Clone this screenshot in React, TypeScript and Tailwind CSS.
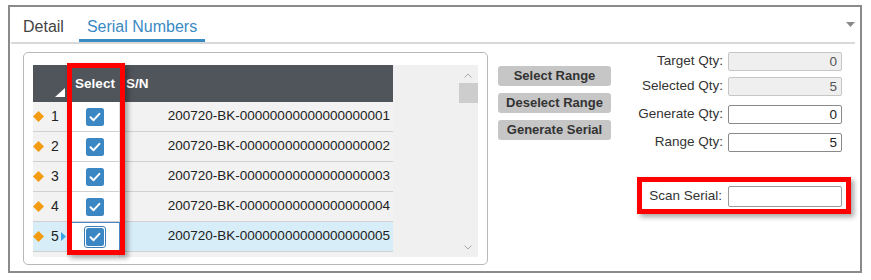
import React from "react";

const rows = [1, 2, 3, 4, 5, 6];

function Diamond() {
  return (
    <svg width="11" height="11" viewBox="0 0 10 10">
      <polygon points="5,0 10,5 5,10 0,5" fill="#f39c12" />
    </svg>
  );
}

function Check({ focused }: { focused?: boolean }) {
  if (focused) {
    return (
      <div className="w-[22px] h-[22px] border border-[#3e7fb8] rounded-[3px] bg-white flex items-center justify-center">
        <svg width="18" height="18" viewBox="0 0 18 18">
          <rect x="0" y="0" width="18" height="18" rx="2.5" fill="#3a87c4" />
          <path d="M4.5 9.2 L7.6 12.2 L13.4 5.8" stroke="#fff" strokeWidth="2" fill="none" strokeLinecap="round" strokeLinejoin="round" />
        </svg>
      </div>
    );
  }
  return (
    <svg width="18" height="18" viewBox="0 0 18 18">
      <rect x="0" y="0" width="18" height="18" rx="2.5" fill="#3a87c4" />
      <path d="M4.5 9.2 L7.6 12.2 L13.4 5.8" stroke="#fff" strokeWidth="2" fill="none" strokeLinecap="round" strokeLinejoin="round" />
    </svg>
  );
}

function QtyRow({ label, value, disabled, className }: { label: string; value: string; disabled?: boolean; className?: string }) {
  return (
    <div className={"flex items-center justify-end h-[19px] " + (className ?? "")}>
      <span className="text-[13.5px] text-[#333] mr-[5px]">{label}</span>
      <div
        className={
          disabled
            ? "w-[114px] h-full rounded-[2px] border border-[#c6c6c6] bg-[#efefef] text-[13.5px] text-[#555] text-right pr-[4px] leading-[17px]"
            : "w-[114px] h-full rounded-[2px] border border-[#8a8a8a] bg-white text-[13.5px] text-[#222] text-right pr-[4px] leading-[17px]"
        }
      >
        {value}
      </div>
    </div>
  );
}

export default function App() {
  return (
    <div
      className="w-[871px] h-[280px] bg-white pt-[5px] pl-[8px] overflow-hidden"
      style={{ fontFamily: '"Liberation Sans", Arial, sans-serif' }}
    >
      <div className="w-[854px] h-[268px] border-2 border-[#8a8a8a] flex flex-col">
        {/* Tabs */}
        <div className="h-[35px] flex items-stretch pl-[5px]">
          <div className="px-2 pt-[8px] text-[16px] text-[#444]">Detail</div>
          <div className="ml-[7px] px-2 pt-[8px] text-[16px] text-[#3a8ac4] border-b-[3px] border-[#3a8ac4]">
            Serial Numbers
          </div>
          <div className="ml-auto mr-[5px] pt-[15px]">
            <svg width="9" height="5" viewBox="0 0 9 5">
              <polygon points="0,0 9,0 4.5,5" fill="#8a8a8a" />
            </svg>
          </div>
        </div>
        <div className="h-[2px] bg-[#d9d9d9] ml-[1px] mr-[5px]" />

        <div className="flex mt-[8px]">
          {/* Grid panel */}
          <div className="relative ml-[13px] w-[465px] h-[213px] border border-[#b8b8b8] rounded-[5px] pt-[12px] pl-[9px]">
            <div className="w-[445px] h-[192px] bg-[#f0f0f0] overflow-hidden flex">
              <div className="w-[360px] flex flex-col">
                <div className="h-[37px] shrink-0 bg-[#50545b] flex text-white font-bold text-[13.5px]">
                  <div className="w-[37px] relative">
                    <svg className="absolute left-[22px] top-[23px]" width="10" height="9" viewBox="0 0 10 9">
                      <polygon points="10,0 10,9 0,9" fill="#fff" />
                    </svg>
                  </div>
                  <div className="w-[50px] flex items-center justify-center pt-[1px]">Select</div>
                  <div className="flex-1 flex items-center pl-[6px] pt-[1px]">S/N</div>
                </div>
                {rows.map((n) => {
                  const active = n === 5;
                  const partial = n === 6;
                  const cellBg = active ? "bg-[#d7eef9]" : "bg-[#f2f2f2]";
                  return (
                    <div key={n} className="h-[30px] shrink-0 flex border-b border-[#d0d0d0] text-[#222]">
                      <div className={"w-[37px] flex items-center border-r border-[#e0e0e0] " + cellBg}>
                        {!partial && (
                          <>
                            <Diamond />
                            <span className="ml-[7px] text-[14px]">{n}</span>
                          </>
                        )}
                        {active && (
                          <svg className="ml-[2px]" width="5" height="9" viewBox="0 0 5 9">
                            <polygon points="0,0 5,4.5 0,9" fill="#3ea3e0" />
                          </svg>
                        )}
                      </div>
                      <div
                        className={
                          "w-[50px] flex items-center justify-center bg-white " +
                          (active ? "border border-[#4a86c5]" : "border-r border-[#e0e0e0]")
                        }
                      >
                        <Check focused={active} />
                      </div>
                      <div className={"flex-1 flex items-center justify-end pr-[3px] text-[13.5px] " + cellBg}>
                        {partial ? "" : "200720-BK-" + String(n).padStart(20, "0")}
                      </div>
                    </div>
                  );
                })}
              </div>
              <div className="flex-1" />
              <div className="w-[20px] flex flex-col items-center">
                <svg className="mt-[8px]" width="8" height="5" viewBox="0 0 8 5">
                  <path d="M0.5 4.5 L4 1 L7.5 4.5" stroke="#a8a8a8" strokeWidth="1" fill="none" />
                </svg>
                <div className="mt-[5px] w-[19px] h-[20px] bg-[#cdcdcd]" />
                <svg className="mt-auto mb-[7px]" width="8" height="5" viewBox="0 0 8 5">
                  <path d="M0.5 0.5 L4 4 L7.5 0.5" stroke="#a8a8a8" strokeWidth="1" fill="none" />
                </svg>
              </div>
            </div>
            <div className="absolute left-[43px] top-[10px] w-[58px] h-[192px] border-[5px] border-[#ff0000] shadow-[3px_3px_5px_rgba(0,0,0,0.35)]" />
          </div>

          {/* Buttons */}
          <div className="ml-[10px] pt-[14px] flex flex-col gap-[7px]">
            {["Select Range", "Deselect Range", "Generate Serial"].map((b) => (
              <div
                key={b}
                className="w-[113px] h-[20px] rounded-[3px] bg-[#c6c6c6] text-[#333] font-bold text-[13px] flex items-center justify-center"
              >
                {b}
              </div>
            ))}
          </div>

          {/* Quantities */}
          <div className="ml-auto mr-[18px] flex flex-col">
            <QtyRow label="Target Qty:" value="0" disabled />
            <QtyRow label="Selected Qty:" value="5" disabled className="mt-[6px]" />
            <QtyRow label="Generate Qty:" value="0" className="mt-[9px]" />
            <QtyRow label="Range Qty:" value="5" className="mt-[9px]" />
            <div className="relative ml-auto mt-[34px] flex items-center h-[21px]">
              <span className="text-[13.5px] text-[#333] mr-[6px]">Scan Serial:</span>
              <div className="w-[114px] h-full rounded-[2px] border border-[#9a9a9a] bg-white" />
              <div className="absolute -left-[12px] -right-[9px] -top-[9px] -bottom-[7px] border-[5px] border-[#ff0000] shadow-[3px_3px_5px_rgba(0,0,0,0.35)]" />
            </div>
          </div>
        </div>
      </div>
    </div>
  );
}
